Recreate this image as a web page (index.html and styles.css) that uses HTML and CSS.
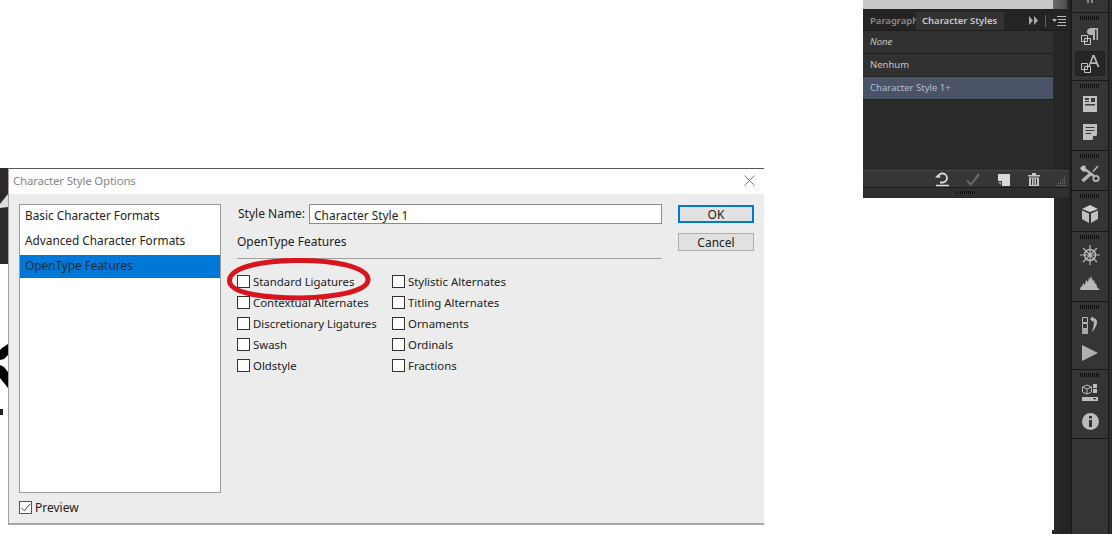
FILE: index.html
```html
<!DOCTYPE html>
<html lang="en">
<head>
<meta charset="utf-8">
<title>Character Style Options</title>
<link rel="stylesheet" href="styles.css">
</head>
<body>
<div class="desk">
  <svg class="frag" width="8" height="260" viewBox="0 0 8 260">
    <path fill="#2d2927" d="M0 0H8V96H0Z"/>
    <path fill="#dcdcdc" d="M8 26L0 36V40L8 39Z"/>
    <path fill="#000" d="M8 176L2 180L0 182V192L4 191L8 187Z"/>
    <path fill="#000" d="M0 197L4 199L8 204V220L4 215L0 210Z"/>
    <path fill="#222" d="M0 241H3V247H0Z"/>
  </svg>

  <section class="dialog">
    <header class="titlebar">
      <span class="title">Character Style Options</span>
      <svg class="close" width="11" height="11" viewBox="0 0 11 11"><path d="M.5.5L10.500 10.500M10.500.5L.5 10.500" stroke="#777" fill="none"/></svg>
    </header>
    <div class="dbody">
      <div class="leftcol">
        <ul class="list">
          <li class="item">Basic Character Formats</li>
          <li class="item">Advanced Character Formats</li>
          <li class="item item-sel">OpenType Features</li>
        </ul>
        <label class="check preview"><span class="box box-on"><svg width="11" height="11" viewBox="0 0 11 11"><path d="M1.500 6L4.300 8.800L10 2" stroke="#444" fill="none"/></svg></span>Preview</label>
      </div>
      <div class="midcol">
        <div class="namerow"><span class="namelabel">Style Name:</span><span class="input">Character Style 1</span></div>
        <div class="heading">OpenType Features</div>
        <div class="grid">
          <label class="check"><span class="box"></span>Standard Ligatures</label>
          <label class="check"><span class="box"></span>Stylistic Alternates</label>
          <label class="check"><span class="box"></span>Contextual Alternates</label>
          <label class="check"><span class="box"></span>Titling Alternates</label>
          <label class="check"><span class="box"></span>Discretionary Ligatures</label>
          <label class="check"><span class="box"></span>Ornaments</label>
          <label class="check"><span class="box"></span>Swash</label>
          <label class="check"><span class="box"></span>Ordinals</label>
          <label class="check"><span class="box"></span>Oldstyle</label>
          <label class="check"><span class="box"></span>Fractions</label>
        </div>
      </div>
      <div class="btncol">
        <div class="btn btn-ok">OK</div>
        <div class="btn">Cancel</div>
      </div>
    </div>
  </section>

  <svg class="circle" width="150" height="46" viewBox="0 0 150 46">
    <path d="M3.500 24C3 12 30 4 68 3.500C108 2.500 141 10 142 22C143 34 112 40 74 41C36 41 4 36 3.500 24Z" fill="none" stroke="#d8141f" stroke-width="5"/>
  </svg>

  <section class="panel">
    <div class="panel-top"><div class="top-light"></div><div class="top-grad"></div></div>
    <div class="tabs">
      <span class="tab">Paragraph</span>
      <span class="tab tab-on">Character Styles</span>
      <span class="tabicons">
        <svg width="37" height="12" viewBox="0 0 37 12">
          <path fill="#aaa" d="M0 1L4 5.500L0 10ZM5 1L9 5.500L5 10Z"/>
          <path fill="#666" d="M16 0H17V12H16Z"/>
          <path fill="#bbb" d="M23 4H28L25.500 7ZM28 1H37V2H28ZM29 4H37V5H29ZM29 7H37V8H29ZM28 10H37V11H28Z"/>
        </svg>
      </span>
    </div>
    <div class="panelmain">
      <div class="plist">
        <div class="row row-none">None</div>
        <div class="row">Nenhum</div>
        <div class="row row-sel">Character Style 1+</div>
      </div>
      <div class="scroll"></div>
    </div>
    <div class="pbar">
      <svg width="108" height="16" viewBox="0 0 108 16">
        <path d="M2 14.500H15" stroke="#ddd" fill="none" stroke-width="1.500"/>
        <path d="M4 6.500A4.500 4.500 0 1 1 8.500 11.500H6" stroke="#ddd" fill="none" stroke-width="1.800"/>
        <path d="M1 6.500L4 3.500L7 6.500Z" fill="#ddd"/>
        <path d="M34 9L37 12L44 2L46 4L37 15L32 10Z" fill="#666"/>
        <path d="M64 3H76V15H68V10H64Z" fill="#d8d8d8"/>
        <path d="M64 11H67V14Z" fill="#aaa"/>
        <path d="M94 4H106V5.500H94ZM98 2H102V4H98ZM95 6.500H105V15H95Z" fill="#c8c8c8"/>
        <path d="M97.500 7.500V14M100 7.500V14M102.500 7.500V14" stroke="#333" fill="none"/>
      </svg>
      <svg class="corner" width="10" height="10" viewBox="0 0 10 10"><path fill="#777" d="M8 0h1v1H8zM6 2h1v1H6zM8 2h1v1H8zM4 4h1v1H4zM6 4h1v1H6zM8 4h1v1H8zM2 6h1v1H2zM4 6h1v1H4zM6 6h1v1H6zM8 6h1v1H8zM0 8h1v1H0zM2 8h1v1H2zM4 8h1v1H4zM6 8h1v1H6zM8 8h1v1H8z"/></svg>
    </div>
    <div class="pfoot"><span class="grip"></span></div>
  </section>

  <aside class="dock">
    <div class="gutter"></div>
    <div class="tools">
      <div class="sec sec-0">
        <svg width="6" height="3" viewBox="0 0 6 3"><path fill="#888" d="M0 0H2V3H0ZM4 0H6V3H4Z"/></svg>
      </div>
      <div class="sec sec-1">
        <span class="grip"></span>
        <div class="tool">
          <svg width="18" height="18" viewBox="0 0 18 18"><path d="M6 5C6 2 8 1 11 1H17V13H15.500V2.500H14V13H12V8H10C8 8 6 7 6 5Z" fill="#b4b4b4"/><path d="M.5 8.500H6.500V14.500H.5ZM3.500 11.500H9.500V17.500H3.500Z" fill="#353535" stroke="#c4c4c4"/></svg>
        </div>
        <div class="tool tool-on">
          <svg width="19" height="18" viewBox="0 0 19 18"><path d="M7 12L11.500 0H13.500L18.500 12H16.500L15.300 9H9.700L8.600 12ZM10.400 7.200H14.600L12.500 2.200Z" fill="#b8b8b8"/><path d="M.5 8.500H6.500V14.500H.5ZM3.500 11.500H9.500V17.500H3.500Z" fill="#262626" stroke="#c4c4c4"/></svg>
        </div>
      </div>
      <div class="sec sec-2">
        <span class="grip"></span>
        <div class="tool">
          <svg width="16" height="18" viewBox="0 0 16 18"><path fill="#c0c0c0" d="M1 1H15V17H1Z"/><path fill="#3a3a3a" d="M3 3H7V5H3ZM3 6H7V7H3ZM9 3H13V7H9ZM3 9H13V10.500H3Z"/></svg>
        </div>
        <div class="tool">
          <svg width="16" height="18" viewBox="0 0 16 18"><path fill="#bebebe" d="M1 1H15V12L10 17H1Z"/><path fill="#3a3a3a" d="M3.500 4H12.500V5H3.500ZM3.500 7H12.500V8H3.500ZM3.500 10H9V11H3.500ZM11 13H15L11 17Z"/></svg>
        </div>
      </div>
      <div class="sec sec-3">
        <span class="grip"></span>
        <div class="tool">
          <svg width="20" height="18" viewBox="0 0 20 18"><g fill="none" stroke="#b6b6b6"><path d="M18 1L13 6.500" stroke-width="1.500"/><path d="M11.500 8L2.500 16" stroke-width="3.500"/><path d="M4 3.500L14.500 11.500" stroke-width="2.500"/><circle cx="16" cy="13.500" r="2.700" stroke-width="1.800"/></g><path fill="#c0c0c0" d="M0 3L3 0.500L6 1L5 3.500L7 5L4.500 7L2 6Z"/></svg>
        </div>
      </div>
      <div class="sec sec-4">
        <span class="grip"></span>
        <div class="tool">
          <svg width="18" height="20" viewBox="0 0 18 20"><path fill="#d0d0d0" d="M9 1L17 5L9 8L1 5Z"/><path fill="#c0c0c0" d="M1 6.500L8 9.500V19L1 15ZM17 6.500L10 9.500V19L17 15Z"/></svg>
        </div>
      </div>
      <div class="sec sec-5">
        <span class="grip"></span>
        <div class="tool">
          <svg width="20" height="20" viewBox="0 0 20 20"><g fill="none" stroke="#b8b8b8"><circle cx="10" cy="10" r="5.500" stroke-width="1.500"/><path d="M10 0V20M0 10H20M3 3L17 17M17 3L3 17" stroke-width="1.200"/></g></svg>
        </div>
        <div class="tool">
          <svg width="20" height="14" viewBox="0 0 20 14"><path fill="#b8b8b8" d="M0 14L1 10L2 11L3 7L5 9L6 4L8 6L9 1L10 4L11 0L13 5L14 4L15 8L16 7L17 11L20 14Z"/></svg>
        </div>
      </div>
      <div class="sec sec-6">
        <span class="grip"></span>
        <div class="tool">
          <svg width="18" height="18" viewBox="0 0 18 18"><path d="M1.500 1.500H6.500V6.500H1.500ZM1.500 7.500H6.500V12.500H1.500Z" fill="none" stroke="#b8b8b8"/><path d="M1 13H7V18H1Z" fill="#a8a8a8"/><path d="M9 3L12 0V2C16 2 17 6 15 10C14 12 13 14 11 16C12 12 14 7 12 4V6Z" fill="#b8b8b8"/></svg>
        </div>
        <div class="tool">
          <svg width="16" height="16" viewBox="0 0 16 16"><path fill="#b0b0b0" d="M0 0L16 8L0 16Z"/></svg>
        </div>
      </div>
      <div class="sec sec-7">
        <span class="grip"></span>
        <div class="tool">
          <svg width="16" height="18" viewBox="0 0 16 18"><path fill="none" stroke="#b8b8b8" d="M5 1L9.500 3V8L5 10L.5 8V3ZM.5 3L5 5L9.500 3M5 5V10"/><path fill="#bdbdbd" d="M11 0H15V4H11ZM11 5H15V9H11ZM0 13H16V17H0Z"/><path fill="#333" d="M11 14H14.500L12.700 16Z"/></svg>
        </div>
        <div class="tool">
          <svg width="17" height="17" viewBox="0 0 17 17"><circle cx="8.500" cy="8.500" r="8.500" fill="#bcbcbc"/><path fill="#333" d="M7 3H10V5.500H7ZM7 7H10V14H7Z"/></svg>
        </div>
      </div>
      <div class="sec sec-8"></div>
    </div>
    <div class="dock-end"></div>
  </aside>
  <div class="dock-foot"></div>
</div>
</body>
</html>
```
FILE: styles.css
```css
* { box-sizing: border-box; }
html, body { margin: 0; padding: 0; background: #fff; }
.desk { position: relative; width: 1112px; height: 534px; overflow: hidden; font-family: "Noto Sans", sans-serif; }
.frag { position: absolute; left: 0; top: 168px; }
ul { list-style: none; margin: 0; padding: 0; }

.dialog { position: absolute; left: 8px; top: 168px; width: 756px; height: 357px; display: flex; flex-direction: column; border-top: 1px solid #555; border-left: 1px solid #a0a0a0; border-bottom: 2px solid #a8a8a8; color: #222; font-size: 12px; background: #ececec; }
.titlebar { height: 25px; flex: none; background: #fff; display: flex; align-items: center; justify-content: space-between; padding: 0 9px 2px 4px; }
.title { color: #878787; font-size: 11.500px; letter-spacing: -.2px; }
.dbody { flex: 1; display: flex; padding: 10px 10px 0; }
.leftcol { width: 202px; flex: none; display: flex; flex-direction: column; }
.list { height: 289px; background: #fff; border: 1px solid #9c9c9c; font-size: 11.800px; }
.item { height: 25px; line-height: 21px; padding-left: 5px; }
.item-sel { height: 23px; background: #0078d7; color: #1c2a3a; }
.check { display: flex; align-items: center; height: 21px; gap: 3px; line-height: 13px; font-size: 11.400px; }
.preview { height: 13px; margin-top: 8px; font-size: 12px; }
.box { width: 13px; height: 13px; flex: none; border: 1px solid #333; background: #fff; display: flex; }
.box-on { border-color: #555; }
.midcol { width: 425px; flex: none; margin-left: 16px; display: flex; flex-direction: column; }
.namerow { display: flex; height: 20px; align-items: center; gap: 4px; padding-left: 1px; }
.namelabel { flex: none; line-height: 18px; }
.input { flex: 1; height: 20px; background: #fff; border: 1px solid #8c8c8c; padding-left: 4px; line-height: 20px; font-size: 11.900px; }
.heading { height: 35px; padding-top: 9px; line-height: 18px; border-bottom: 1px solid #a0a0a0; }
.grid { display: grid; grid-template-columns: 155px 155px; grid-auto-rows: 21px; margin-top: 12px; }
.btncol { width: 76px; margin-left: 16px; display: flex; flex-direction: column; gap: 10px; padding-top: 1px; }
.btn { height: 18px; background: #e1e1e1; border: 1px solid #adadad; text-align: center; line-height: 18px; }
.btn-ok { border: 2px solid #0078d7; line-height: 16px; }
.close { flex: none; }

.circle { position: absolute; left: 226px; top: 257px; }

.panel { position: absolute; z-index: 1; left: 863px; top: 0; width: 206px; height: 198px; background: #2b2b2b; display: flex; flex-direction: column; color: #c4c4c4; font-size: 9.500px; }
.panel-top { height: 9px; flex: none; display: flex; }
.top-light { width: 190px; background: #c8c8c8; }
.top-grad { flex: 1; background: linear-gradient(90deg, #6a6a6a, #4c4c4c); margin-right: 2px; }
.tabs { height: 22px; flex: none; background: #242424; display: flex; align-items: flex-end; border-bottom: 1px solid #1c1c1c; }
.tab { height: 18px; line-height: 17px; padding-left: 7px; width: 53px; overflow: hidden; white-space: nowrap; color: #8a8a8a; font-weight: 600; }
.tab-on { width: 88px; background: #333; color: #c8c8c8; padding-left: 6px; }
.tabicons { margin-left: auto; margin-right: 3px; height: 18px; display: flex; align-items: center; }
.panelmain { flex: 1; display: flex; min-height: 0; }
.plist { width: 190px; background: #2b2b2b; }
.row { height: 23px; line-height: 22px; padding-left: 7px; border-bottom: 1px solid #1f1f1f; background: #313131; }
.row-none { font-style: italic; }
.row-sel { background: #4b5368; color: #b8bcc6; }
.scroll { flex: 1; background: #262626; }
.pbar { height: 18px; flex: none; background: #363636; border-top: 1px solid #444; border-bottom: 1px solid #1b1b1b; display: flex; align-items: center; justify-content: flex-end; gap: 14px; padding-right: 3px; }
.corner { align-self: flex-end; }
.pfoot { height: 10px; flex: none; background: #2f2f2f; border-bottom: 1px solid #3a2626; display: flex; justify-content: center; padding-top: 1px; }

.grip { display: block; width: 20px; height: 4px; flex: none; background: repeating-linear-gradient(90deg, #0c0c0c 0 1px, #3a3a3a 1px 2px); }
.pfoot .grip { height: 3px; margin-top: 2px; }
.sec .grip { margin-bottom: 2px; }

.dock { position: absolute; left: 1054px; top: 0; width: 58px; height: 534px; background: #262626; display: flex; }
.dock-foot { position: absolute; left: 1052px; top: 530px; width: 2px; height: 4px; background: #262626; }
.gutter { width: 17px; flex: none; background: linear-gradient(90deg, #2a2a2a, #212121); }
.tools { flex: none; display: flex; flex-direction: column; background: #353535; border-left: 1px solid #181818; border-right: 1px solid #181818; width: 38px; }
.dock-end { flex: 1; background: #2b2b2b; }
.sec { flex: none; border-bottom: 1px solid #181818; display: flex; flex-direction: column; align-items: center; padding-top: 3px; }
.sec-0 { height: 13px; padding-top: 0; }
.sec-1 { height: 68px; }
.sec-2 { height: 70px; }
.sec-3 { height: 40px; }
.sec-4 { height: 41px; }
.sec-5 { height: 70px; }
.sec-6 { height: 68px; }
.sec-7 { height: 69px; }
.sec-8 { flex: 1; border-bottom: 0; }
.tool { width: 30px; height: 28px; flex: none; display: flex; align-items: center; justify-content: center; }
.tool-on { height: 25px; background: #262626; border-radius: 3px; border: 1px solid #1f1f1f; margin-top: 1px; }
```
